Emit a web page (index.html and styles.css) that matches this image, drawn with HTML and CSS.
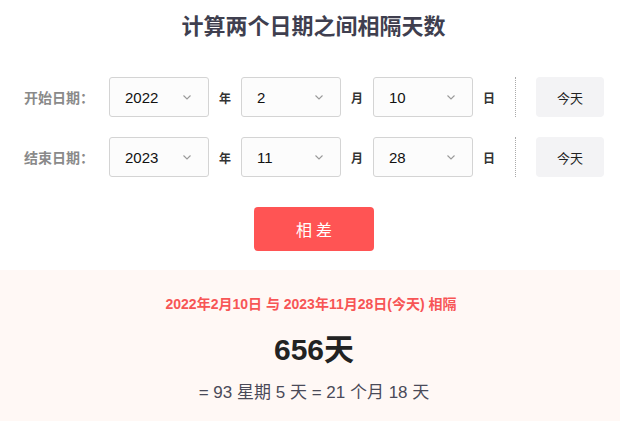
FILE: index.html
```html
<!DOCTYPE html>
<html lang="zh">
<head>
<meta charset="utf-8">
<link rel="stylesheet" href="styles.css">
</head>
<body>
<div class="page">
  <h1 class="title">计算两个日期之间相隔天数</h1>
  <div class="form">
    <div class="row">
      <span class="label">开始日期：</span>
      <div class="select"><span>2022</span><svg class="chev" viewBox="0 0 8 5"><path d="M0.5 0.5l3.5 3.5 3.5-3.5"/></svg></div>
      <span class="unit">年</span>
      <div class="select"><span>2</span><svg class="chev" viewBox="0 0 8 5"><path d="M0.5 0.5l3.5 3.5 3.5-3.5"/></svg></div>
      <span class="unit">月</span>
      <div class="select"><span>10</span><svg class="chev" viewBox="0 0 8 5"><path d="M0.5 0.5l3.5 3.5 3.5-3.5"/></svg></div>
      <span class="unit">日</span>
      <span class="divider"></span>
      <button class="today">今天</button>
    </div>
    <div class="row">
      <span class="label">结束日期：</span>
      <div class="select"><span>2023</span><svg class="chev" viewBox="0 0 8 5"><path d="M0.5 0.5l3.5 3.5 3.5-3.5"/></svg></div>
      <span class="unit">年</span>
      <div class="select"><span>11</span><svg class="chev" viewBox="0 0 8 5"><path d="M0.5 0.5l3.5 3.5 3.5-3.5"/></svg></div>
      <span class="unit">月</span>
      <div class="select"><span>28</span><svg class="chev" viewBox="0 0 8 5"><path d="M0.5 0.5l3.5 3.5 3.5-3.5"/></svg></div>
      <span class="unit">日</span>
      <span class="divider"></span>
      <button class="today">今天</button>
    </div>
  </div>
  <div class="actions"><button class="calc">相差</button></div>
  <div class="result">
    <p class="range">2022年2月10日 与 2023年11月28日(今天) 相隔</p>
    <p class="days">656天</p>
    <p class="detail">= 93 星期 5 天 = 21 个月 18 天</p>
  </div>
</div>
</body>
</html>
```
FILE: styles.css
```css
* { box-sizing: border-box; }
html, body { margin: 0; padding: 0; background: #fff; }
body {
  font-family: "Liberation Sans", Arial, "Noto Sans CJK SC", sans-serif;
  color: #333;
}
.page { width: 620px; height: 421px; overflow: hidden; }
.title {
  margin: 0;
  padding: 13px 0 0 7px;
  height: 77px;
  text-align: center;
  font-size: 22px;
  line-height: 28px;
  font-weight: bold;
  color: #3f3f4f;
}
.form { display: flex; flex-direction: column; gap: 20px; }
.row { display: flex; align-items: center; height: 40px; padding-left: 24px; }
.label {
  width: 85px;
  font-size: 14px;
  font-weight: bold;
  color: #8a8a8a;
  white-space: nowrap;
}
.select {
  width: 100px;
  height: 40px;
  border: 1px solid #d4d4d4;
  border-radius: 3px;
  background: #fcfcfc;
  display: flex;
  align-items: center;
  justify-content: space-between;
  padding: 0 17px 0 15px;
  font-size: 15px;
  color: #111;
}
.chev { width: 8px; height: 5px; fill: none; stroke: #9a9a9a; stroke-width: 1.1; }
.unit {
  width: 32px;
  text-align: center;
  font-size: 12px;
  font-weight: bold;
  color: #333;
}
.divider {
  width: 0;
  height: 40px;
  border-left: 1px dotted #aaa;
  margin: 0 20px 0 10px;
}
.today {
  width: 68px;
  height: 40px;
  border: none;
  border-radius: 4px;
  background: #f3f3f5;
  font-family: inherit;
  font-size: 13px;
  color: #222;
  padding: 0;
}
.actions { display: flex; justify-content: center; padding: 30px 0 0 8px; height: 93px; }
.calc {
  width: 120px;
  height: 44px;
  border: none;
  border-radius: 4px;
  background: #ff5454;
  color: #fff;
  font-family: inherit;
  font-size: 16px;
  letter-spacing: 4px;
  padding: 0 0 0 4px;
}
.result {
  background: #fff8f5;
  height: 151px;
  text-align: center;
  padding-top: 25px;
}
.result p { margin: 0; }
.range { font-size: 14px; font-weight: bold; color: #f75555; line-height: 18px; padding-left: 2px; }
.days { font-size: 30px; font-weight: bold; color: #222; line-height: 36px; margin-top: 19px !important; padding-left: 8px; }
.detail { font-size: 17px; color: #4a4a58; line-height: 22px; margin-top: 14px !important; padding-left: 8px; }
```
